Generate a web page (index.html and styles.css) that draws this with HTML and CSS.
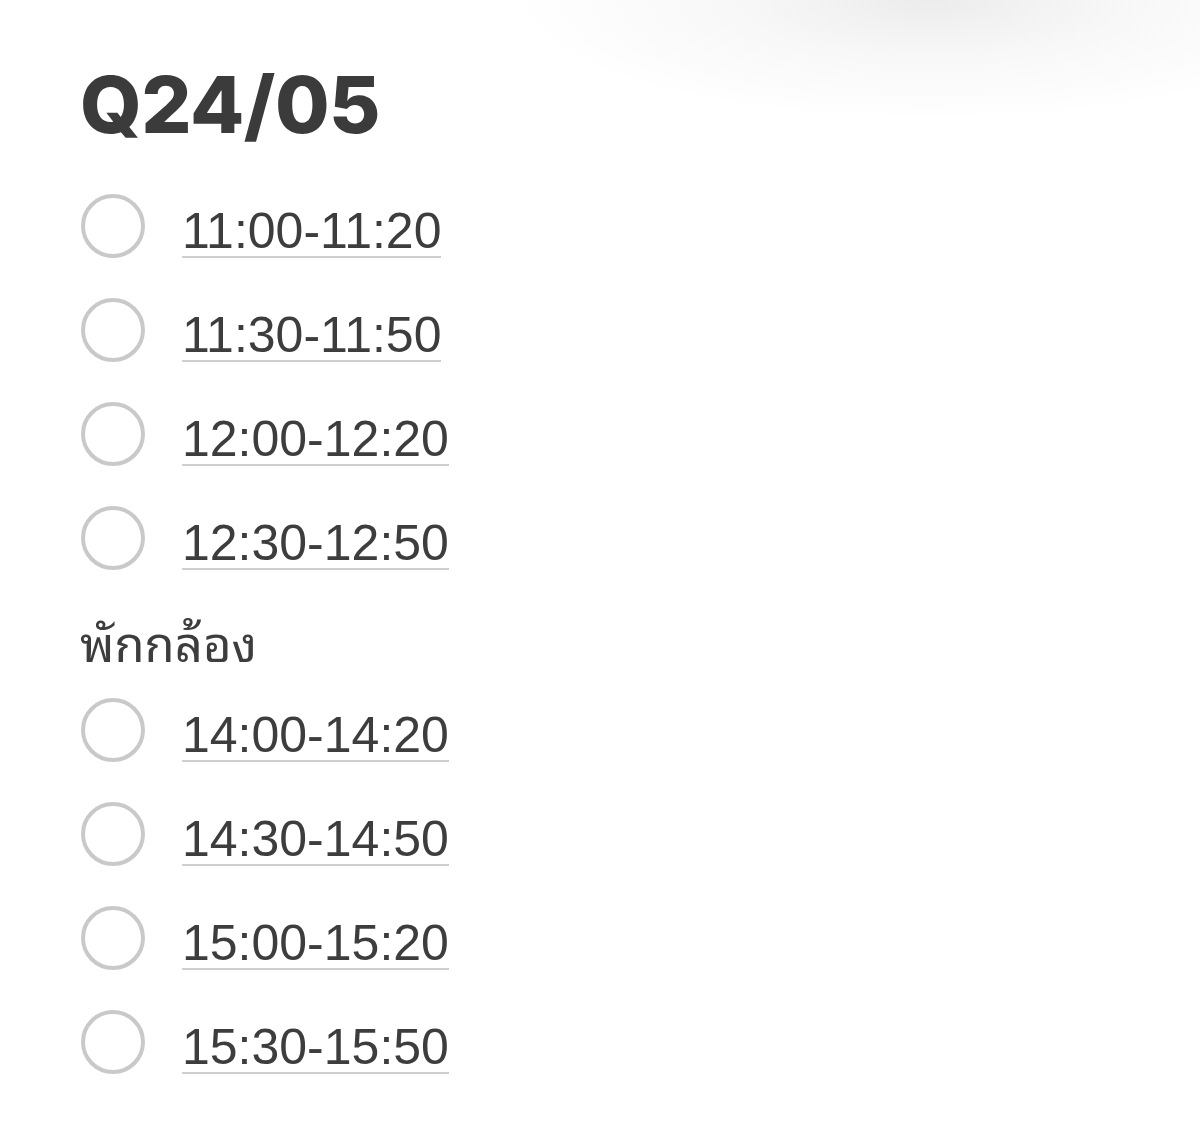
FILE: index.html
```html
<!DOCTYPE html>
<html lang="th">
<head>
    <meta charset="UTF-8">
    <meta name="viewport" content="width=device-width, initial-scale=1.0">
    <title>Q24/05</title>
    <link rel="stylesheet" href="styles.css">
</head>
<body>
    <div class="slots">
        <h1 class="day-title">Q24/05</h1>
        <div class="slot"><span class="radio"></span><span class="slot-time">11:00-11:20</span></div>
        <div class="slot"><span class="radio"></span><span class="slot-time">11:30-11:50</span></div>
        <div class="slot"><span class="radio"></span><span class="slot-time">12:00-12:20</span></div>
        <div class="slot"><span class="radio"></span><span class="slot-time">12:30-12:50</span></div>
        <div class="break-label">พักกล้อง</div>
        <div class="slot"><span class="radio"></span><span class="slot-time">14:00-14:20</span></div>
        <div class="slot"><span class="radio"></span><span class="slot-time">14:30-14:50</span></div>
        <div class="slot"><span class="radio"></span><span class="slot-time">15:00-15:20</span></div>
        <div class="slot"><span class="radio"></span><span class="slot-time">15:30-15:50</span></div>
    </div>
</body>
</html>
```

FILE: styles.css
```css
body {
    margin: 0;
    min-height: 1146px;
    font-family: "Liberation Sans", Arial, sans-serif;
    color: #3d3d3d;
    /* soft blurred shadow peeking in at the top right */
    background:
        radial-gradient(ellipse 420px 120px at 930px 0, #ececec 0%, rgba(244,244,244,0.7) 45%, rgba(255,255,255,0) 100%) no-repeat,
        #ffffff;
}
.slots {
    padding: 62px 0 0 80px;
}
.day-title {
    margin: 0 0 28px 0;
    font-family: Inter, "Liberation Sans", sans-serif;
    font-size: 79px;
    line-height: 84px;
    font-weight: 800;
    letter-spacing: -0.5px;
    color: #3b3b3b;
}
.slot {
    display: flex;
    align-items: flex-start;
    height: 104px;
}
.radio {
    box-sizing: border-box;
    width: 64px;
    height: 64px;
    margin: 20px 0 0 1px;
    border: 4px solid #c9c9cc;
    border-radius: 50%;
}
.slot-time {
    margin: 32px 0 0 37px;
    font-size: 50px;
    line-height: 50px;
    border-bottom: 2px solid #cfcfd1;
    color: #3d3d3d;
}
.break-label {
    height: 76px;
    padding-top: 12px;
    font-family: "Noto Sans Thai Looped", "Loma", "Garuda", "Waree", "Norasi", "Noto Sans Thai", "DejaVu Sans", sans-serif;
    font-size: 49px;
    line-height: 76px;
    color: #3d3d3d;
}
```
